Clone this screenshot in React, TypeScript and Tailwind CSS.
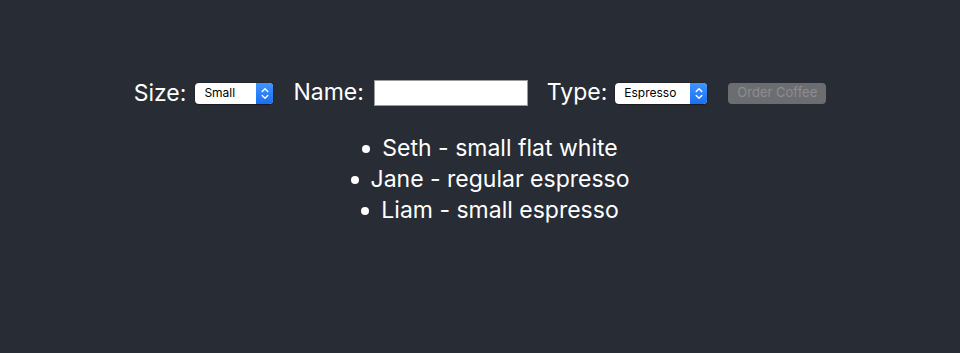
import { ReactNode } from "react";

const orders = [
  "Seth - small flat white",
  "Jane - regular espresso",
  "Liam - small espresso",
];

function Stepper() {
  return (
    <span className="flex h-full w-[17px] items-center justify-center rounded-r-[4px] bg-gradient-to-b from-[#3f95ff] to-[#1a6ff2]">
      <svg width="8" height="13" viewBox="0 0 8 13" fill="none">
        <path
          d="M1.2 4.6 4 1.8l2.8 2.8M1.2 8.4 4 11.2l2.8-2.8"
          stroke="white"
          strokeWidth="1.4"
          strokeLinecap="round"
          strokeLinejoin="round"
        />
      </svg>
    </span>
  );
}

function FakeSelect({ value, width }: { value: string; width: string }) {
  return (
    <div
      className={`flex h-[21px] ${width} items-center rounded-[4px] bg-white shadow-[0_0_0_0.5px_rgba(0,0,0,0.3),0_1px_1px_rgba(0,0,0,0.25)]`}
    >
      <span className="flex-1 pl-[9px] text-[12px] text-black">{value}</span>
      <Stepper />
    </div>
  );
}

function Label({ children }: { children: ReactNode }) {
  return <span className="text-[23px] leading-none text-white">{children}</span>;
}

export default function App() {
  return (
    <div className="min-h-[353px] bg-[#282c34] pt-[80px] font-['Inter','Noto_Sans',sans-serif]">
      {/* order form */}
      <div className="flex items-center justify-center">
        <Label>Size:</Label>
        <div className="ml-[9px]">
          <FakeSelect value="Small" width="w-[78px]" />
        </div>
        <div className="ml-[20px]">
          <Label>Name:</Label>
        </div>
        <div className="ml-[10px] h-[26px] w-[154px] border border-[#9a9a9a] bg-white" />
        <div className="ml-[19px]">
          <Label>Type:</Label>
        </div>
        <div className="ml-[8px]">
          <FakeSelect value="Espresso" width="w-[92px]" />
        </div>
        <button className="ml-[21px] h-[21px] w-[98px] rounded-[4px] bg-[#6c6d71] text-[13px] text-[#8c8d91]">
          Order Coffee
        </button>
      </div>

      {/* orders */}
      <ul className="mt-[27px] pl-[20px] text-[23px] leading-[31px] text-white">
        {orders.map((order) => (
          <li key={order} className="flex items-center justify-center">
            <span className="mr-[12px] h-[8px] w-[8px] rounded-full bg-white" />
            {order}
          </li>
        ))}
      </ul>
    </div>
  );
}
